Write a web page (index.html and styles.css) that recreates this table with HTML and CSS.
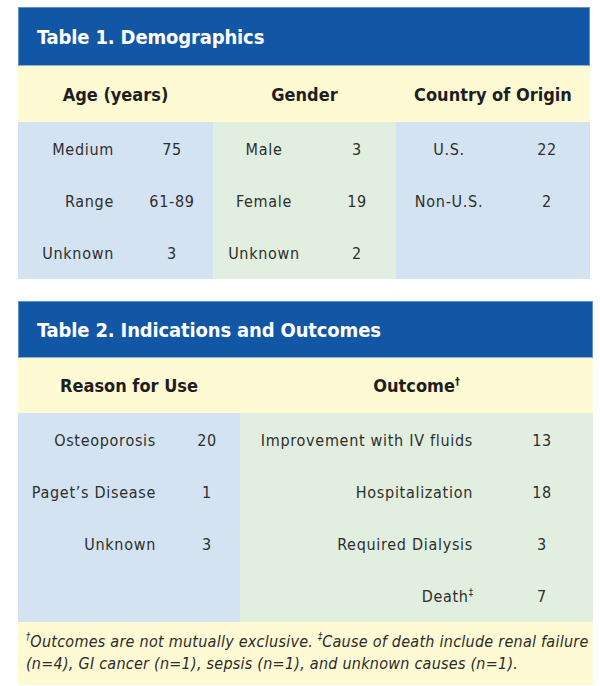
FILE: index.html
```html
<!DOCTYPE html>
<html>
<head>
<meta charset="utf-8">
<link rel="stylesheet" href="styles.css">
</head>
<body>
<div class="page">
  <section class="tbl tbl1">
    <div class="title">Table 1. Demographics</div>
    <div class="heads three">
      <div>Age (years)</div>
      <div>Gender</div>
      <div>Country of Origin</div>
    </div>
    <div class="body three">
      <div class="grp blue g-age">
        <span class="lab">Medium</span><span class="val">75</span>
        <span class="lab">Range</span><span class="val">61-89</span>
        <span class="lab">Unknown</span><span class="val">3</span>
      </div>
      <div class="grp green g-gender">
        <span class="lab">Male</span><span class="val">3</span>
        <span class="lab">Female</span><span class="val">19</span>
        <span class="lab">Unknown</span><span class="val">2</span>
      </div>
      <div class="grp blue g-country">
        <span class="lab">U.S.</span><span class="val">22</span>
        <span class="lab">Non-U.S.</span><span class="val">2</span>
      </div>
    </div>
  </section>

  <section class="tbl tbl2">
    <div class="title">Table 2. Indications and Outcomes</div>
    <div class="heads two">
      <div>Reason for Use</div>
      <div>Outcome<span class="mark">†</span></div>
    </div>
    <div class="body two">
      <div class="grp blue g-reason">
        <span class="lab">Osteoporosis</span><span class="val">20</span>
        <span class="lab">Paget’s Disease</span><span class="val">1</span>
        <span class="lab">Unknown</span><span class="val">3</span>
      </div>
      <div class="grp green g-outcome">
        <span class="lab">Improvement with IV fluids</span><span class="val">13</span>
        <span class="lab">Hospitalization</span><span class="val">18</span>
        <span class="lab">Required Dialysis</span><span class="val">3</span>
        <span class="lab">Death<span class="mark">‡</span></span><span class="val">7</span>
      </div>
    </div>
    <div class="note">
      <div class="line"><span class="mark">†</span>Outcomes are not mutually exclusive. <span class="mark">‡</span>Cause of death include renal failure</div>
      <div class="line">(n=4), GI cancer (n=1), sepsis (n=1), and unknown causes (n=1).</div>
    </div>
  </section>
</div>
</body>
</html>
```

FILE: styles.css
```css
* { box-sizing: border-box; }
html, body { margin: 0; padding: 0; background: #ffffff; }
body {
  font-family: "DejaVu Sans Condensed", "DejaVu Sans", sans-serif;
  font-stretch: condensed;
  color: #2e2e2e;
}
.page { padding: 7px 0 0 18px; }

.tbl1 { width: 572px; }
.tbl2 { width: 575px; margin-top: 24px; }

.title {
  background: #1257a6;
  color: #ffffff;
  font-weight: bold;
  font-size: 20px;
  letter-spacing: -0.15px;
  height: 59px;
  display: flex;
  align-items: center;
  padding: 1px 0 0 18px;
  border: 1px solid #5d8fcb;
  border-bottom-color: #8fb0d6;
}
.tbl2 .title { height: 57px; }

.heads {
  background: #fefad4;
  display: grid;
  height: 56px;
  align-items: center;
  text-align: center;
  font-weight: bold;
  font-size: 18px;
  color: #1e1e1e;
}
.tbl2 .heads { height: 55px; }

.mark {
  font-size: 0.6em;
  vertical-align: top;
  line-height: 1.3;
  letter-spacing: 0;
}

.three { grid-template-columns: 195px 183px 194px; }
.two { grid-template-columns: 222px 353px; }

.body { display: grid; font-size: 16px; letter-spacing: 0.7px; }
.tbl1 .body { height: 155px; }
.tbl2 .body { height: 207px; }

.blue { background: #d4e3f1; }
.green { background: #e2efe0; }

.grp {
  display: grid;
  grid-auto-rows: 52px;
  align-items: center;
  align-content: start;
  padding-top: 1px;
}
.grp .val { text-align: center; }

.g-age { grid-template-columns: 96px 28px 60px; }
.g-age .lab { text-align: right; }
.g-age .val { grid-column: 3; }

.g-gender { grid-template-columns: 102px 12px 60px; }
.g-gender .lab { text-align: center; }
.g-gender .val { grid-column: 3; }

.g-country { grid-template-columns: 106px 15px 60px; }
.g-country .lab { text-align: center; }
.g-country .val { grid-column: 3; }

.g-reason { grid-template-columns: 138px 21px 60px; }
.g-reason .lab { text-align: right; }
.g-reason .val { grid-column: 3; }

.g-outcome { grid-template-columns: 233px 39px 60px; }
.g-outcome .lab { text-align: right; }
.g-outcome .val { grid-column: 3; }

.note {
  background: #fefad4;
  font-style: italic;
  font-size: 16px;
  letter-spacing: 0.25px;
  line-height: 22px;
  padding: 11px 2px 0 8px;
  height: 65px;
  color: #2b2b2b;
  white-space: nowrap;
}
```
